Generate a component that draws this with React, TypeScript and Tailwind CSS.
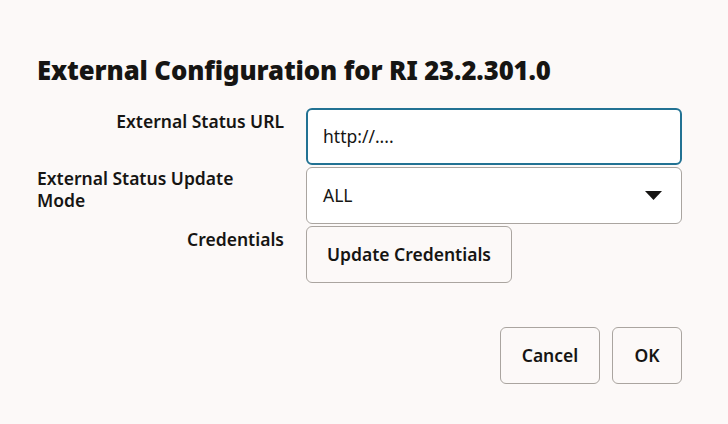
import React from "react";

export default function App() {
  return (
    <div
      className="w-[728px] h-[424px] bg-[#fcf9f8] text-[#161513] overflow-hidden"
      style={{ fontFamily: '"Noto Sans", "Open Sans", sans-serif' }}
    >
      <div className="pt-[54px] pl-[37px] pr-[45px]">
        <h1 className="text-[25.7px] leading-[34px] font-black tracking-[-0.1px]">
          External Configuration for RI 23.2.301.0
        </h1>
        <div className="mt-[20px] grid grid-cols-[247px_376px] gap-x-[22px] gap-y-[2px]">
          <div className="text-[17.5px] font-semibold text-right pt-[1px] leading-[24px]">External Status URL</div>
          <div className="h-[57px] rounded-[6px] border-2 border-[#227293] bg-white flex items-center px-[15px] text-[17.5px]">
            http://....
          </div>
          <div className="text-[17.5px] font-semibold leading-[22px] pt-[0px] pr-[10px]">External Status Update Mode</div>
          <div className="h-[57px] rounded-[6px] border border-[#aaa5a0] bg-white flex items-center justify-between pl-[16px] pr-[19px] text-[17.5px]">
            <span>ALL</span>
            <svg width="17" height="9" viewBox="0 0 17 9">
              <path d="M0 0 L17 0 L8.5 9 Z" fill="#161513" />
            </svg>
          </div>
          <div className="text-[17.5px] font-semibold text-right pt-[1px] leading-[24px]">Credentials</div>
          <div>
            <button className="h-[57px] w-[206px] rounded-[6px] border border-[#aaa5a0] bg-[#fcf9f8] text-[17.5px] font-semibold">
              Update Credentials
            </button>
          </div>
        </div>
        <div className="mt-[44px] flex justify-end gap-[12px] pr-[1px]">
          <button className="h-[57px] w-[100px] rounded-[6px] border border-[#aaa5a0] bg-[#fcf9f8] text-[17.5px] font-semibold">
            Cancel
          </button>
          <button className="h-[57px] w-[70px] rounded-[6px] border border-[#aaa5a0] bg-[#fcf9f8] text-[17.5px] font-semibold">
            OK
          </button>
        </div>
      </div>
    </div>
  );
}
